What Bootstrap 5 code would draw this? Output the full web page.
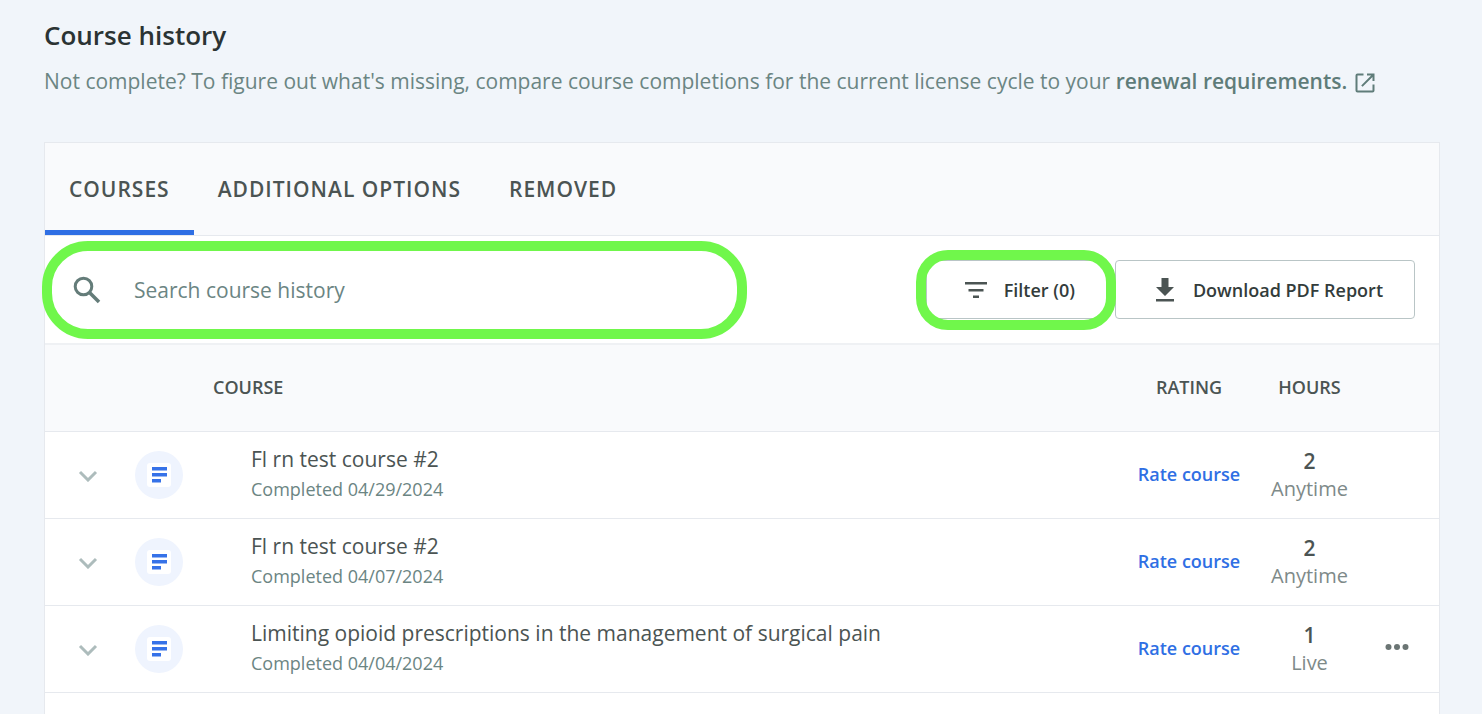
<!DOCTYPE html>
<html lang="en">
<head>
<meta charset="utf-8">
<meta name="viewport" content="width=device-width, initial-scale=1">
<title>Course history</title>
<link href="https://cdn.jsdelivr.net/npm/bootstrap@5.3.0/dist/css/bootstrap.min.css" rel="stylesheet">
<style>
  :root { --ink: #4b5453; --muted-ink: #6b8583; --line: #e6e9ee; --tint: #f9fafc; --accent: #2f6fe4; --ring: #70f74b; }
  body { background: #f1f5fa; color: var(--ink); font-family: "Open Sans", "Noto Sans", sans-serif; font-size: 20px; line-height: 28px; }
  .page { padding: 18px 42px 0 44px; height: 100vh; overflow: hidden; }
  .page-title { font-size: 26px; line-height: 34px; font-weight: 600; color: #2b3333; }
  .intro { font-size: 21px; line-height: 30px; color: var(--muted-ink); padding-top: 14px; padding-bottom: 46px; }
  .intro a { color: #5f7c79; font-weight: 600; text-decoration: none; }
  .panel { background: #fff; border: 1px solid var(--line); border-bottom: 0; }
  .tabs { background: var(--tint); border-bottom: 1px solid var(--line); }
  .tabs .nav-link { color: var(--ink); font-size: 21px; line-height: 28px; font-weight: 600; letter-spacing: 1px; padding: 32px 24px 27px; border-radius: 0; border-bottom: 5px solid transparent; }
  .tabs .nav-link.active { border-bottom-color: var(--accent); }
  .toolbar { height: 107px; padding-right: 24px; }
  .search { width: 51%; height: 88px; padding-left: 27px; padding-right: 40px; }
  .search input { border: 0; background: transparent; padding: 2px 0 0; margin-left: 32px; font-size: 21px; color: var(--ink); box-shadow: none; }
  .search input::placeholder { color: var(--muted-ink); opacity: 1; }
  .search input:focus { box-shadow: none; background: transparent; }
  .ringed { position: relative; }
  .ringed::after { content: ""; position: absolute; border: 10px solid var(--ring); pointer-events: none; z-index: 2; }
  .search::after { inset: -5px -3px; border-radius: 46px; }
  .filter::after { inset: -11px -10px -12px -11px; border-radius: 32px; }
  .tool-btn { height: 59px; padding: 0 31px 0 37px; background: #fff; border: 1px solid #b9c5c6; border-radius: 4px; color: #333c3b; font-size: 18px; font-weight: 600; white-space: nowrap; }
  .history { table-layout: fixed; margin: 0; --bs-table-bg: transparent; color: var(--ink); }
  .history > :not(caption) > * > * { padding: 0; border-bottom: 1px solid var(--line); vertical-align: middle; height: 87px; }
  .history thead th { background: var(--tint); border-top: 2px solid #eff1f4; font-size: 18px; font-weight: 600; padding-bottom: 2px; }
  .history th.course-head { padding-left: 25px; }
  .history td.course-cell { padding: 0 0 2px 63px; }
  .history td.rating-cell { padding-bottom: 2px; }
  .col-toggle { width: 85px; } .col-kind { width: 58px; } .col-rating { width: 120px; } .col-hours { width: 121px; } .col-more { width: 69px; }
  .course-name { font-size: 21px; line-height: 30px; }
  .done { font-size: 18px; line-height: 30px; color: var(--muted-ink); }
  .kind { width: 48px; height: 48px; background: #eff4fe; }
  .rate { color: var(--accent); font-size: 18px; font-weight: 600; text-decoration: none; }
  .count { font-size: 21px; line-height: 27px; font-weight: 600; }
  .format { font-size: 20px; line-height: 27px; color: #7e8a89; }
  .history td.more { padding: 0 15px 4px 0; }
</style>
</head>
<body>
<main class="page d-flex flex-column">
  <h1 class="page-title m-0">Course history</h1>
  <p class="intro m-0">Not complete? To figure out what's missing, compare course completions for the current license cycle to your
    <a href="#">renewal requirements.
      <svg width="24" height="24" viewBox="0 0 24 24" fill="currentColor" aria-hidden="true"><path d="M19.500 19.500H4.500V4.500h6V2.500H4.500a2 2 0 0 0-2 2v15a2 2 0 0 0 2 2h15a2 2 0 0 0 2-2v-6h-2zM14 2.500v2h4.100L8.200 14.400l1.400 1.400 9.900-9.900V10h2V2.500z"/></svg></a></p>

  <section class="panel flex-grow-1">
    <nav class="tabs nav">
      <a class="nav-link active" href="#" aria-current="page">COURSES</a>
      <a class="nav-link" href="#">ADDITIONAL OPTIONS</a>
      <a class="nav-link" href="#">REMOVED</a>
    </nav>

    <div class="toolbar d-flex align-items-center justify-content-between">
      <div class="search ringed d-flex align-items-center">
        <label for="q" class="d-flex" aria-label="Search"><svg width="30" height="30" viewBox="0 0 30 30" fill="none" stroke="#647c79" stroke-width="3" aria-hidden="true"><circle cx="11.500" cy="11.500" r="8.300"/><path d="M17.500 17.500 27 27" stroke-width="3.600"/></svg></label>
        <input id="q" type="search" class="form-control" placeholder="Search course history">
      </div>
      <div class="d-flex gap-2">
        <button type="button" class="tool-btn filter ringed d-flex align-items-center gap-3">
          <svg width="24" height="24" viewBox="0 0 24 24" fill="#4b5453" aria-hidden="true"><path d="M1 4h22v2.600H1zM4.500 11h15v2.400h-15zM9 17.500h6v2.600H9z"/></svg>
          Filter (0)
        </button>
        <button type="button" class="tool-btn d-flex align-items-center gap-3">
          <svg width="24" height="24" viewBox="0 0 24 24" fill="#4b5453" aria-hidden="true"><path d="M8.500 0h7v9H21l-9 9-9-9h5.500zM3 21h18v2.600H3z"/></svg>
          Download PDF Report
        </button>
      </div>
    </div>

    <table class="history table">
      <colgroup><col class="col-toggle"><col class="col-kind"><col><col class="col-rating"><col class="col-hours"><col class="col-more"></colgroup>
      <thead>
        <tr><th></th><th></th><th class="course-head">COURSE</th><th class="text-center">RATING</th><th class="text-center">HOURS</th><th></th></tr>
      </thead>
      <tbody>
        <tr>
          <td><button type="button" class="btn p-0 border-0 d-block mx-auto" aria-label="Show details"><svg class="d-block" width="20" height="14" viewBox="0 0 20 14" fill="none" stroke="#adbcbc" stroke-width="3" aria-hidden="true"><path d="m2 4 8 8 8-8"/></svg></button></td>
          <td><span class="kind rounded-circle d-flex align-items-center justify-content-center mx-auto"><svg width="24" height="24" viewBox="0 0 24 24" aria-hidden="true"><rect width="24" height="24" rx="3" fill="#fff"/><path d="M5 4h15v3.500H5zM5 10h15v3.500H5zM5 16h9v3.500H5z" fill="#3672e8"/></svg></span></td>
          <td class="course-cell"><div class="course-name">Fl rn test course #2</div><div class="done">Completed 04/29/2024</div></td>
          <td class="rating-cell text-center"><a class="rate" href="#">Rate course</a></td>
          <td class="text-center"><div class="count">2</div><div class="format">Anytime</div></td>
          <td></td>
        </tr>
        <tr>
          <td><button type="button" class="btn p-0 border-0 d-block mx-auto" aria-label="Show details"><svg class="d-block" width="20" height="14" viewBox="0 0 20 14" fill="none" stroke="#adbcbc" stroke-width="3" aria-hidden="true"><path d="m2 4 8 8 8-8"/></svg></button></td>
          <td><span class="kind rounded-circle d-flex align-items-center justify-content-center mx-auto"><svg width="24" height="24" viewBox="0 0 24 24" aria-hidden="true"><rect width="24" height="24" rx="3" fill="#fff"/><path d="M5 4h15v3.500H5zM5 10h15v3.500H5zM5 16h9v3.500H5z" fill="#3672e8"/></svg></span></td>
          <td class="course-cell"><div class="course-name">Fl rn test course #2</div><div class="done">Completed 04/07/2024</div></td>
          <td class="rating-cell text-center"><a class="rate" href="#">Rate course</a></td>
          <td class="text-center"><div class="count">2</div><div class="format">Anytime</div></td>
          <td></td>
        </tr>
        <tr>
          <td><button type="button" class="btn p-0 border-0 d-block mx-auto" aria-label="Show details"><svg class="d-block" width="20" height="14" viewBox="0 0 20 14" fill="none" stroke="#adbcbc" stroke-width="3" aria-hidden="true"><path d="m2 4 8 8 8-8"/></svg></button></td>
          <td><span class="kind rounded-circle d-flex align-items-center justify-content-center mx-auto"><svg width="24" height="24" viewBox="0 0 24 24" aria-hidden="true"><rect width="24" height="24" rx="3" fill="#fff"/><path d="M5 4h15v3.500H5zM5 10h15v3.500H5zM5 16h9v3.500H5z" fill="#3672e8"/></svg></span></td>
          <td class="course-cell"><div class="course-name">Limiting opioid prescriptions in the management of surgical pain</div><div class="done">Completed 04/04/2024</div></td>
          <td class="rating-cell text-center"><a class="rate" href="#">Rate course</a></td>
          <td class="text-center"><div class="count">1</div><div class="format">Live</div></td>
          <td class="more"><button type="button" class="btn p-0 border-0 d-block mx-auto" aria-label="More actions"><svg class="d-block" width="24" height="8" viewBox="0 0 24 8" fill="#6b7574" aria-hidden="true"><circle cx="3.500" cy="4" r="3"/><circle cx="12" cy="4" r="3"/><circle cx="20.500" cy="4" r="3"/></svg></button></td>
        </tr>
      </tbody>
    </table>
  </section>
</main>
<script src="https://cdn.jsdelivr.net/npm/bootstrap@5.3.0/dist/js/bootstrap.bundle.min.js"></script>
</body>
</html>
